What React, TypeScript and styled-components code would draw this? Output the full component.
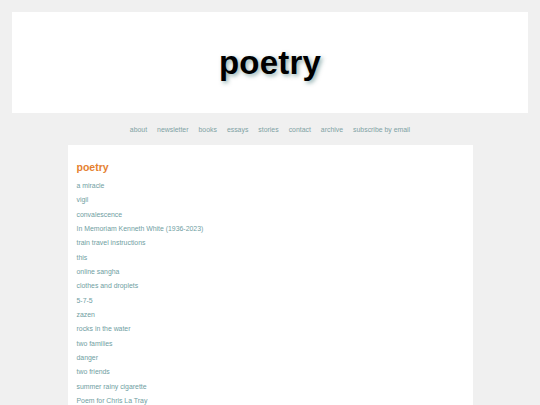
import React from "react";
import styled, { createGlobalStyle } from "styled-components";

const GlobalStyle = createGlobalStyle`
  html, body {
    margin: 0;
    padding: 0;
    background: #f0f0f0;
    font-family: "Liberation Sans", Arial, sans-serif;
  }
`;

const Page = styled.div`
  padding: 12px 12px 0;
`;

const Header = styled.header`
  height: 101px;
  background: #ffffff;
  display: flex;
  align-items: center;
  justify-content: center;
`;

const Title = styled.h1`
  margin: 0;
  font-size: 33px;
  font-weight: bold;
  color: #000;
  letter-spacing: 0.2px;
  text-shadow: 2px 2px 4px rgba(40, 100, 100, 0.5);
`;

const Nav = styled.nav`
  display: flex;
  justify-content: center;
  gap: 10px;
  height: 32px;
  align-items: center;
`;

const NavLink = styled.a`
  font-size: 6.9px;
  color: #7fa2a4;
  text-decoration: none;
`;

const Content = styled.main`
  width: 405px;
  margin: 0 auto;
  background: #ffffff;
  padding: 15px 9px 0;
  box-sizing: border-box;
  min-height: 300px;
`;

const Heading = styled.h2`
  margin: 0 0 5px;
  font-size: 10.5px;
  line-height: 14px;
  font-weight: bold;
  color: #e5812f;
`;

const List = styled.ul`
  list-style: none;
  margin: 0;
  padding: 0;
`;

const Item = styled.li`
  font-size: 6.9px;
  line-height: 14.33px;

  a {
    color: #6f9ea2;
    text-decoration: none;
  }
`;

const navItems = ["about", "newsletter", "books", "essays", "stories", "contact", "archive", "subscribe by email"];

const poems = [
  "a miracle",
  "vigil",
  "convalescence",
  "In Memoriam Kenneth White (1936-2023)",
  "train travel instructions",
  "this",
  "online sangha",
  "clothes and droplets",
  "5-7-5",
  "zazen",
  "rocks in the water",
  "two families",
  "danger",
  "two friends",
  "summer rainy cigarette",
  "Poem for Chris La Tray",
];

export default function App() {
  return (
    <>
      <GlobalStyle />
      <Page>
        <Header>
          <Title>poetry</Title>
        </Header>
        <Nav>
          {navItems.map((n) => (
            <NavLink key={n} href="#">{n}</NavLink>
          ))}
        </Nav>
        <Content>
          <Heading>poetry</Heading>
          <List>
            {poems.map((p) => (
              <Item key={p}>
                <a href="#">{p}</a>
              </Item>
            ))}
          </List>
        </Content>
      </Page>
    </>
  );
}
